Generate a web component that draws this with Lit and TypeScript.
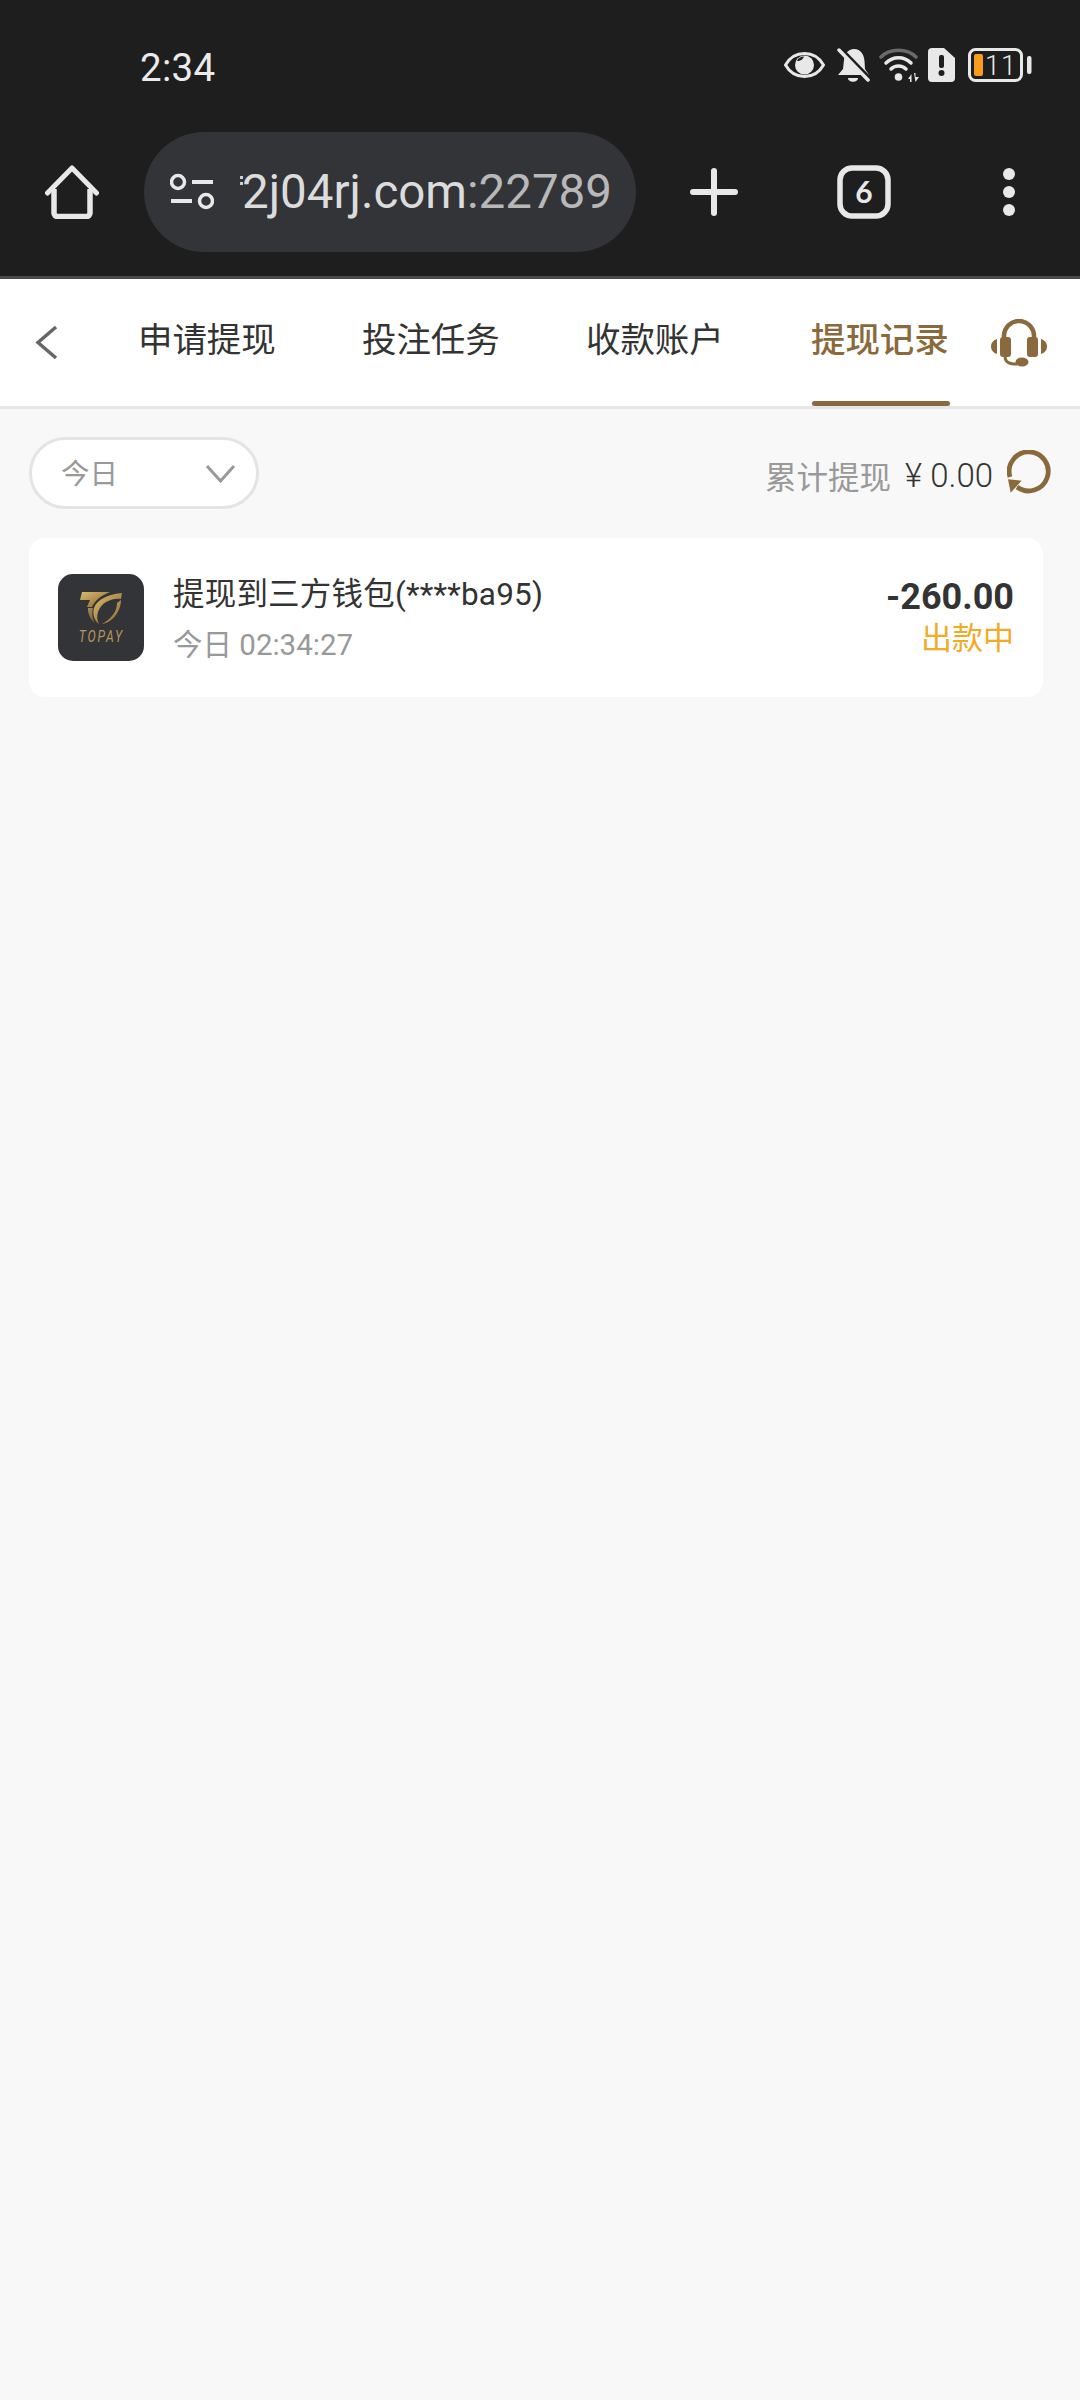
import { LitElement, html, css } from "lit";
import { customElement } from "lit/decorators.js";

@customElement("app-root")
export class AppRoot extends LitElement {
  static styles = css`
    :host { display: block; min-height: 2400px; background: #f8f8f8; font-family: Roboto, "Noto Sans CJK SC", sans-serif; color: #333; }
    svg { display: block; flex: none; }
    .chrome { background: #1e1e1e; border-bottom: 3px solid #4a4a4a; height: 276px; display: flex; flex-direction: column; color: #e8e8e8; }
    .status { height: 48px; margin-top: 41px; display: flex; align-items: center; padding-left: 140px; }
    .time { font-size: 38.500px; line-height: 48px; width: 644px; color: #ebebeb; letter-spacing: .3px; position: relative; top: 3px; }
    .sicons { display: flex; align-items: center; }
    .toolbar { margin-top: 43px; height: 120px; display: flex; align-items: center; padding-left: 45px; }
    .pill { margin-left: 45px; width: 492px; height: 120px; border-radius: 60px; background: #333438; display: flex; align-items: center; padding-left: 26px; box-sizing: border-box; }
    .url { margin-left: 26px; width: 372px; white-space: nowrap; display: flex; justify-content: flex-end; font-size: 47.500px; line-height: 70px; color: #dcdcdc; font-weight: 400; position: relative; }
    .url b { font-weight: 400; color: #b8b8b8; }
    .url::before { content: ""; position: absolute; left: 0; top: 19px; width: 3px; height: 11px; background: linear-gradient(#cfcfcf 0 3px, transparent 3px 6px, #cfcfcf 6px 9px, transparent 9px); }
    .plus { margin-left: 54px; }
    .tabbtn { margin-left: 99px; }
    .dots { margin-left: 112px; }
    .tabs { height: 127px; background: #fff; border-bottom: 3px solid #e6e6e6; display: flex; align-items: center; position: relative; box-sizing: content-box; }
    .back { margin-left: 35px; }
    .tablist { display: flex; gap: 89px; margin-left: 80px; height: 100%; }
    .tab { font-size: 34.500px; line-height: 123px; width: 135px; white-space: nowrap; color: #333; position: relative; letter-spacing: -.1px; height: 127px; }
    .tab.on { color: #8a6a3c; font-weight: 500; left: 1px; }
    .tab.on::after { content: ""; position: absolute; left: 1px; width: 138px; bottom: 0; height: 5px; border-radius: 3px; background: #8a6a3c; }
    .headset { margin-left: 46px; }
    .filters { display: flex; align-items: center; padding: 28px 29px 0; height: 72px; }
    .select { width: 230px; height: 72px; box-sizing: border-box; border: 3px solid #e4e4e4; border-radius: 36px; background: #fff; display: flex; align-items: center; justify-content: space-between; padding: 0 20px 0 29px; font-size: 28.500px; color: #999; }
    .select span { margin-top: -3px; }
    .total { margin-left: auto; display: flex; align-items: center; }
    .tlabel { font-size: 31.500px; color: #999; margin-top: 4px; }
    .tval { font-size: 33px; margin-left: 14px; color: #333; font-weight: 300; margin-top: 4px; }
    .refresh { margin-left: 14px; margin-top: -3px; }
    .card { margin: 29px 37px 0 29px; height: 159px; border-radius: 16px; background: #fff; display: flex; align-items: center; padding: 0 29px 0 29px; box-sizing: border-box; }
    .logo { width: 86px; height: 87px; border-radius: 15px; background: #333437; display: flex; flex-direction: column; align-items: center; justify-content: center; flex: none; }
    .tp { font-size: 17px; line-height: 15px; font-style: italic; letter-spacing: 2.500px; color: #b8975a; margin-top: 4px; font-weight: 400; transform: scaleX(.72); }
    .info { margin-left: 29px; flex: 1; }
    .title { font-size: 31.500px; line-height: 44px; color: #333; letter-spacing: .2px; margin-top: 2px; }
    .date { font-size: 29.500px; line-height: 38px; color: #999; margin-top: 9px; }
    .right { text-align: right; }
    .amt { font-size: 36px; line-height: 44px; font-weight: 700; color: #333; margin-top: -2px; }
    .st { font-size: 31px; line-height: 40px; color: #f0ab27; }
  `;

  render() {
    return html`
      <div class="chrome">
        <div class="status">
          <div class="time">2:34</div>
          <div class="sicons">
            <svg width="41" height="28" viewBox="0 0 41 28"><path d="M1.500 14C6 6 13 2.500 20.500 2.500S35 6 39.500 14C35 22 28 25.500 20.500 25.500S6 22 1.500 14Z" fill="none" stroke="#e8e8e8" stroke-width="3"/><circle cx="20.500" cy="14" r="9.500" fill="#e8e8e8"/><path d="M13 10c1-3 4-4.500 7-4.500-1 2.500-3 4.500-7 4.500Z" fill="#1e1e1e"/></svg>
            <svg style="margin-left:12px" width="33" height="35" viewBox="0 0 33 35"><path d="M17 1C24 1 27 7 27.500 13L28 21 32 27H1L6 21 7 12C7.500 6 11 1 17 1Z" fill="#e8e8e8"/><path d="M11 30h10c0 5-10 5-10 0Z" fill="#e8e8e8"/><path d="M3 0l31 32" stroke="#1e1e1e" stroke-width="4"/><path d="M2 2l29 30" stroke="#e8e8e8" stroke-width="3.500" stroke-linecap="round"/></svg>
            <svg style="margin-left:9px" width="41" height="34" viewBox="0 0 41 34"><path d="M2 9C11 0 28 0 37 9" fill="none" stroke="#6a6a6a" stroke-width="3.500" stroke-linecap="round"/><path d="M7 15C14 8 25 8 32 15" fill="none" stroke="#e8e8e8" stroke-width="3.500" stroke-linecap="round"/><path d="M12 21c4-4 11-4 15 0" fill="none" stroke="#e8e8e8" stroke-width="3.500" stroke-linecap="round"/><circle cx="19.500" cy="29" r="3.800" fill="#e8e8e8"/><path d="M29 31l3.500-5v8h-1.500v-3ZM35 25h1.500v4H40l-3.500 5Z" fill="#e8e8e8"/></svg>
            <svg style="margin-left:8px" width="27" height="34" viewBox="0 0 27 34"><path d="M4 0h12l11 10v20a4 4 0 0 1-4 4H4a4 4 0 0 1-4-4V4a4 4 0 0 1 4-4Z" fill="#e8e8e8"/><rect x="11" y="7" width="5" height="13" rx="2" fill="#1e1e1e"/><circle cx="13.500" cy="25" r="3" fill="#1e1e1e"/></svg>
            <svg style="margin-left:13px" width="64" height="34" viewBox="0 0 64 34"><rect x="1.500" y="1.500" width="52" height="31" rx="6" fill="none" stroke="#e8e8e8" stroke-width="3"/><rect x="6" y="6" width="9" height="22" rx="2" fill="#f89c1e"/><rect x="59" y="8" width="4.500" height="18" rx="2" fill="#e8e8e8"/><text x="17" y="27" font-family="Roboto" font-size="27" fill="#e8e8e8" font-weight="300" letter-spacing="1">11</text></svg>
          </div>
        </div>
        <div class="toolbar">
          <svg width="54" height="54" viewBox="0 0 54 54"><path d="M2.500 28L27 3l24.500 25" fill="none" stroke="#e8e8e8" stroke-width="5" stroke-linecap="round" stroke-linejoin="round"/><path d="M9 24v24a3.500 3.500 0 0 0 3.500 3.500h29a3.500 3.500 0 0 0 3.500-3.500V24" fill="none" stroke="#e8e8e8" stroke-width="5.500"/></svg>
          <div class="pill">
            <svg width="44" height="38" viewBox="0 0 44 38"><circle cx="8" cy="9" r="6.500" fill="none" stroke="#e8e8e8" stroke-width="3.500"/><path d="M22 9h21" stroke="#e8e8e8" stroke-width="4"/><path d="M1 28h21" stroke="#e8e8e8" stroke-width="4"/><circle cx="36" cy="28" r="6.500" fill="none" stroke="#e8e8e8" stroke-width="3.500"/></svg>
            <div class="url"><span>2j04rj.com<b>:22789</b></span></div>
          </div>
          <svg class="plus" width="48" height="48" viewBox="0 0 48 48"><path d="M3 24h42M24 3v42" stroke="#e8e8e8" stroke-width="6" stroke-linecap="round"/></svg>
          <svg class="tabbtn" width="54" height="54" viewBox="0 0 54 54"><rect x="3" y="3" width="48" height="48" rx="12" fill="none" stroke="#e8e8e8" stroke-width="5.500"/><text x="27" y="38" text-anchor="middle" font-family="Lato, Roboto" font-size="30" font-weight="700" fill="#e8e8e8">6</text></svg>
          <svg class="dots" width="12" height="48" viewBox="0 0 12 48"><circle cx="6" cy="6" r="6" fill="#e8e8e8"/><circle cx="6" cy="24" r="6" fill="#e8e8e8"/><circle cx="6" cy="42" r="6" fill="#e8e8e8"/></svg>
        </div>
      </div>
      <div class="tabs">
        <svg class="back" width="23" height="35" viewBox="0 0 23 35"><path d="M21 2L3 17.500 21 33" fill="none" stroke="#666" stroke-width="3.500"/></svg>
        <div class="tablist">
          <div class="tab">申请提现</div>
          <div class="tab">投注任务</div>
          <div class="tab">收款账户</div>
          <div class="tab on">提现记录</div>
        </div>
        <svg class="headset" width="56" height="48" viewBox="0 0 56 48" fill="#8a6a3c"><path d="M13 27V17a15 15 0 0 1 30 0v10" fill="none" stroke="#8a6a3c" stroke-width="4.500"/><rect x="9" y="18" width="11" height="20" rx="3"/><rect x="36" y="18" width="11" height="20" rx="3"/><path d="M6 20v15c-8-2-8-13 0-15ZM50 20v15c8-2 8-13 0-15Z"/><path d="M14 37c0 7 5 8 12 8" fill="none" stroke="#8a6a3c" stroke-width="3"/><ellipse cx="31" cy="43" rx="6.500" ry="4.500"/></svg>
      </div>
      <div class="filters">
        <div class="select"><span>今日</span>
          <svg width="31" height="19" viewBox="0 0 31 19"><path d="M2 2l13.500 15L29 2" fill="none" stroke="#999" stroke-width="3"/></svg>
        </div>
        <div class="total">
          <span class="tlabel">累计提现</span><span class="tval">¥ 0.00</span>
          <svg class="refresh" width="44" height="44" viewBox="0 0 44 44"><path d="M3 27A19.500 19.500 0 1 1 10 37" fill="none" stroke="#8a6a3c" stroke-width="4.800"/><path d="M1 29.300l13.600 1.400L3.700 42.700Z" fill="#8a6a3c"/></svg>
        </div>
      </div>
      <div class="card">
        <div class="logo">
          <svg width="43" height="33" viewBox="0 0 43 33">
            <defs><linearGradient id="g" x1="0" y1="0" x2="1" y2="1"><stop offset="0" stop-color="#dcbc6e"/><stop offset=".6" stop-color="#a98546"/><stop offset="1" stop-color="#6a5230"/></linearGradient></defs>
            <path d="M2 0H30C22 3 15 8 12 15H7L10 8H0Z" fill="url(#g)"/>
            <path d="M42 1C30 2 17 7 14 16 12 23 15 29 19 32 15 25 18 15 26 10 31 7 37 6 41 7Z" fill="url(#g)"/>
            <path d="M41 8C41 18 34 30 22 32 33 26 37 18 37 11Z" fill="url(#g)"/>
            <path d="M8 16C8 23 11 28 15 31 12 26 12 20 13 16Z" fill="url(#g)" opacity=".7"/>
          </svg>
          <span class="tp">TOPAY</span>
        </div>
        <div class="info">
          <div class="title">提现到三方钱包(****ba95)</div>
          <div class="date">今日 02:34:27</div>
        </div>
        <div class="right">
          <div class="amt">-260.00</div>
          <div class="st">出款中</div>
        </div>
      </div>
    `;
  }
}
